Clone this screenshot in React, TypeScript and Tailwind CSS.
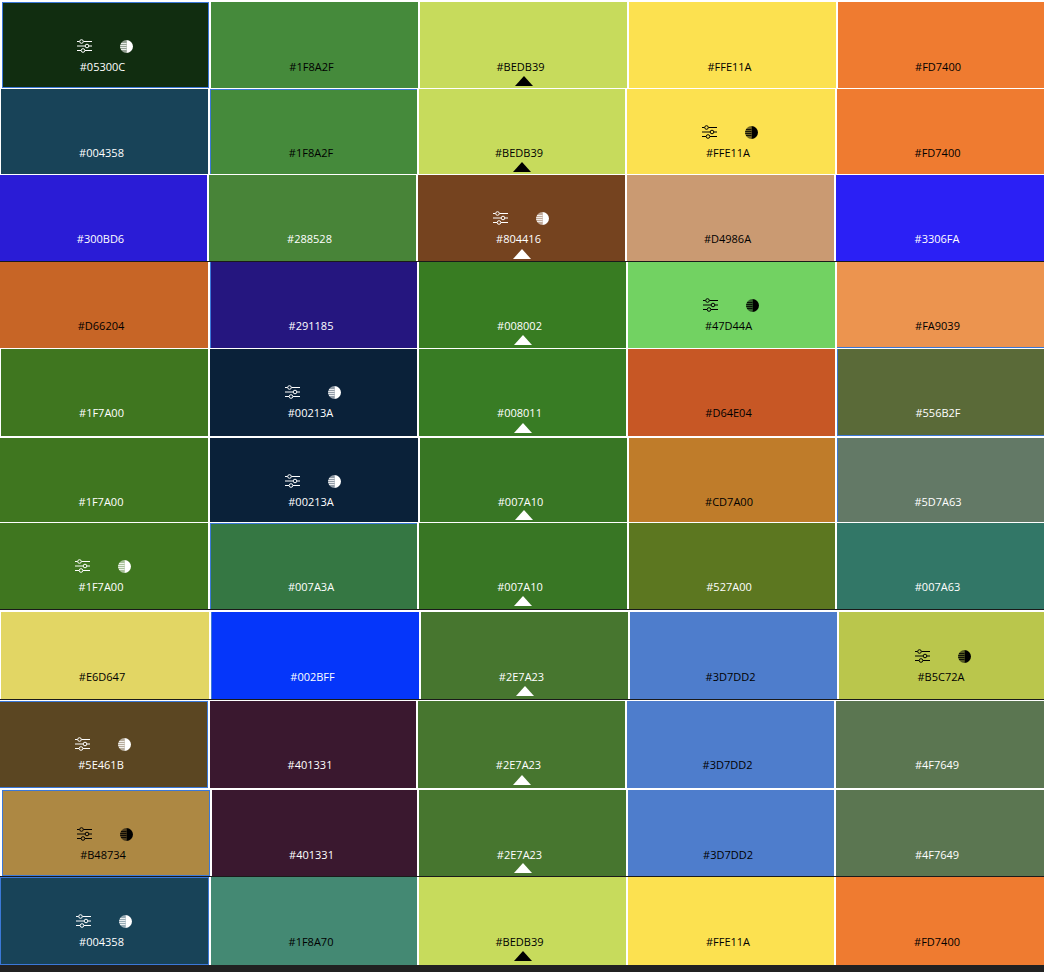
type Cell = {
  hex: string
  bg: string
  w: string
  dark?: boolean
  tools?: boolean
  arrow?: boolean
  edge?: string
}

type Row = { box: string; pad: string; tip: string; cells: Cell[] }

const rows: Row[] = [
  {
    box: "h-[86px] mt-[2px] pl-[2px] gap-[2px]",
    pad: "pb-[13px]",
    tip: "bottom-[2px]",
    cells: [
      { hex: "#05300C", bg: "bg-[#112D10]", w: "w-[207px]", tools: true, edge: "ring-1 ring-inset ring-[#3B78D8]" },
      { hex: "#1F8A2F", bg: "bg-[#458A3B]", w: "w-[207px]", dark: true },
      { hex: "#BEDB39", bg: "bg-[#C7DB5C]", w: "w-[207px]", dark: true, arrow: true },
      { hex: "#FFE11A", bg: "bg-[#FCE150]", w: "w-[207px]", dark: true },
      { hex: "#FD7400", bg: "bg-[#EF7B30]", w: "flex-1", dark: true },
    ],
  },
  {
    box: "h-[85px] mt-[1px] pl-[1px] gap-[2px]",
    pad: "pb-[13px]",
    tip: "bottom-[2px]",
    cells: [
      { hex: "#004358", bg: "bg-[#184358]", w: "w-[207px]" },
      { hex: "#1F8A2F", bg: "bg-[#458A3B]", w: "w-[207px]", dark: true, edge: "border-l border-t border-[#3B78D8]" },
      { hex: "#BEDB39", bg: "bg-[#C7DB5C]", w: "w-[206px]", dark: true, arrow: true },
      { hex: "#FFE11A", bg: "bg-[#FCE150]", w: "w-[208px]", dark: true, tools: true },
      { hex: "#FD7400", bg: "bg-[#EF7B30]", w: "flex-1", dark: true },
    ],
  },
  {
    box: "h-[87px] mt-[1px] gap-[2px] border-b border-[#1a1a1a]",
    pad: "pb-[14px]",
    tip: "bottom-[2px]",
    cells: [
      { hex: "#300BD6", bg: "bg-[#2A1CD6]", w: "w-[207px]" },
      { hex: "#288528", bg: "bg-[#488438]", w: "w-[207px]" },
      { hex: "#804416", bg: "bg-[#75431F]", w: "w-[207px]", tools: true, arrow: true },
      { hex: "#D4986A", bg: "bg-[#CA9A72]", w: "w-[207px]", dark: true },
      { hex: "#3306FA", bg: "bg-[#2B20F5]", w: "flex-1" },
    ],
  },
  {
    box: "h-[86px] gap-[2px]",
    pad: "pb-[14px]",
    tip: "bottom-[3px]",
    cells: [
      { hex: "#D66204", bg: "bg-[#C76526]", w: "w-[208px]", dark: true },
      { hex: "#291185", bg: "bg-[#25167F]", w: "w-[207px]", edge: "border-l border-[#3B78D8]" },
      { hex: "#008002", bg: "bg-[#387C22]", w: "w-[207px]", arrow: true },
      { hex: "#47D44A", bg: "bg-[#72D262]", w: "w-[207px]", dark: true, tools: true },
      { hex: "#FA9039", bg: "bg-[#EC944F]", w: "flex-1", dark: true, edge: "shadow-[inset_0_-1px_0_#3B78D8]" },
    ],
  },
  {
    box: "h-[87px] mt-[1px] pl-[1px] gap-[2px]",
    pad: "pb-[15px]",
    tip: "bottom-[3px]",
    cells: [
      { hex: "#1F7A00", bg: "bg-[#3F761F]", w: "w-[207px]" },
      { hex: "#00213A", bg: "bg-[#0A2139]", w: "w-[207px]", tools: true },
      { hex: "#008011", bg: "bg-[#387C24]", w: "w-[207px]", arrow: true },
      { hex: "#D64E04", bg: "bg-[#C75725]", w: "w-[207px]", dark: true },
      { hex: "#556B2F", bg: "bg-[#5A6A38]", w: "flex-1", edge: "border-l border-[#3B78D8] shadow-[inset_0_-1px_0_#3B78D8]" },
    ],
  },
  {
    box: "h-[84px] mt-[2px] gap-[2px]",
    pad: "pb-[12px]",
    tip: "bottom-[2px]",
    cells: [
      { hex: "#1F7A00", bg: "bg-[#3F761F]", w: "w-[208px]" },
      { hex: "#00213A", bg: "bg-[#0A2139]", w: "w-[208px]", tools: true },
      { hex: "#007A10", bg: "bg-[#387624]", w: "w-[207px]", arrow: true },
      { hex: "#CD7A00", bg: "bg-[#BF7C2A]", w: "w-[206px]", dark: true },
      { hex: "#5D7A63", bg: "bg-[#637966]", w: "flex-1", edge: "border-l border-[#3B78D8]" },
    ],
  },
  {
    box: "h-[87px] mt-[1px] gap-[2px] border-b border-[#1a1a1a]",
    pad: "pb-[14px]",
    tip: "bottom-[3px]",
    cells: [
      { hex: "#1F7A00", bg: "bg-[#3F761F]", w: "w-[208px]", tools: true },
      { hex: "#007A3A", bg: "bg-[#357743]", w: "w-[207px]", edge: "border-l border-t border-[#3B78D8]" },
      { hex: "#007A10", bg: "bg-[#387624]", w: "w-[208px]", arrow: true },
      { hex: "#527A00", bg: "bg-[#5C7720]", w: "w-[206px]" },
      { hex: "#007A63", bg: "bg-[#327767]", w: "flex-1" },
    ],
  },
  {
    box: "h-[88px] mt-[2px] pl-[1px] gap-[2px] border-b border-[#1a1a1a]",
    pad: "pb-[14px]",
    tip: "bottom-[3px]",
    cells: [
      { hex: "#E6D647", bg: "bg-[#E2D664]", w: "w-[208px]", dark: true },
      { hex: "#002BFF", bg: "bg-[#0536FA]", w: "w-[208px]", edge: "border-l border-[#3B78D8]" },
      { hex: "#2E7A23", bg: "bg-[#47762F]", w: "w-[207px]", arrow: true },
      { hex: "#3D7DD2", bg: "bg-[#4E7DCC]", w: "w-[207px]", dark: true },
      { hex: "#B5C72A", bg: "bg-[#BAC64C]", w: "w-[210px]", dark: true, tools: true },
    ],
  },
  {
    box: "h-[87px] mt-[1px] gap-[2px]",
    pad: "pb-[15px]",
    tip: "bottom-[3px]",
    cells: [
      { hex: "#5E461B", bg: "bg-[#5B4622]", w: "w-[208px]", tools: true, edge: "shadow-[inset_0_1px_0_#3B78D8,inset_-1px_0_0_#3B78D8,inset_0_-1px_0_#3B78D8]" },
      { hex: "#401331", bg: "bg-[#3A182F]", w: "w-[206px]" },
      { hex: "#2E7A23", bg: "bg-[#47762F]", w: "w-[207px]", arrow: true },
      { hex: "#3D7DD2", bg: "bg-[#4E7DCC]", w: "w-[207px]", dark: true },
      { hex: "#4F7649", bg: "bg-[#5B7651]", w: "flex-1" },
    ],
  },
  {
    box: "h-[87px] mt-[2px] pl-[2px] gap-[2px] border-b border-[#1a1a1a]",
    pad: "pb-[13px]",
    tip: "bottom-[3px]",
    cells: [
      { hex: "#B48734", bg: "bg-[#AD8843]", w: "w-[208px]", dark: true, tools: true, edge: "ring-1 ring-inset ring-[#3B78D8]" },
      { hex: "#401331", bg: "bg-[#3A182F]", w: "w-[205px]" },
      { hex: "#2E7A23", bg: "bg-[#47762F]", w: "w-[207px]", arrow: true },
      { hex: "#3D7DD2", bg: "bg-[#4E7DCC]", w: "w-[206px]", dark: true },
      { hex: "#4F7649", bg: "bg-[#5B7651]", w: "flex-1" },
    ],
  },
  {
    box: "h-[88px] gap-[2px]",
    pad: "pb-[15px]",
    tip: "bottom-[4px]",
    cells: [
      { hex: "#004358", bg: "bg-[#184358]", w: "w-[209px]", tools: true, edge: "ring-1 ring-inset ring-[#3B78D8]" },
      { hex: "#1F8A70", bg: "bg-[#448973]", w: "w-[206px]", dark: true },
      { hex: "#BEDB39", bg: "bg-[#C7DB5C]", w: "w-[207px]", dark: true, arrow: true },
      { hex: "#FFE11A", bg: "bg-[#FCE150]", w: "w-[206px]", dark: true },
      { hex: "#FD7400", bg: "bg-[#EF7B30]", w: "flex-1", dark: true },
    ],
  },
]

function SlidersIcon() {
  return (
    <svg width="15" height="14" viewBox="0 0 15 14" fill="none" stroke="currentColor" strokeWidth="1">
      <path d="M0 2.5h2.5M6.5 2.5H15M0 7h8M12 7h3M0 11.5h4M8 11.5h7" />
      <circle cx="4.5" cy="2.5" r="1.8" />
      <circle cx="10" cy="7" r="1.8" />
      <circle cx="6" cy="11.5" r="1.8" />
    </svg>
  )
}

function ContrastIcon() {
  return (
    <svg width="13" height="13" viewBox="0 0 13 13" fill="currentColor">
      <path d="M6.5 0a6.5 6.5 0 0 1 0 13z" />
      <path d="M6.5 0v13a6.5 6.5 0 0 1 0-13z" opacity=".55" />
      <path d="M1 3.5h5.5M.2 5.5h6.3M.2 7.5h6.3M1 9.5h5.5" stroke="currentColor" strokeWidth=".8" />
    </svg>
  )
}

function Swatch({ cell, pad, tip }: { cell: Cell; pad: string; tip: string }) {
  const color = cell.dark ? "text-black" : "text-white"
  return (
    <div className={`relative flex flex-col items-center justify-end shrink-0 ${pad} ${cell.w} ${cell.bg} ${color} ${cell.edge ?? ""}`}>
      {cell.tools && (
        <div className="flex items-center gap-[28px] mr-[2px] mb-[6px]">
          <SlidersIcon />
          <ContrastIcon />
        </div>
      )}
      <span className="mr-[6px] text-[11px] font-medium leading-4">{cell.hex}</span>
      {cell.arrow && (
        <div className={`absolute ${tip} left-1/2 -translate-x-1/2 w-0 h-0 border-l-[9px] border-r-[9px] border-b-[10px] border-l-transparent border-r-transparent ${cell.dark ? "border-b-black" : "border-b-white"}`} />
      )}
    </div>
  )
}

export default function App() {
  return (
    <div className="min-h-screen flex flex-col overflow-hidden bg-white font-['Open_Sans',sans-serif]">
      {rows.map((row, i) => (
        <div key={i} className={`flex shrink-0 ${row.box}`}>
          {row.cells.map((cell, j) => (
            <Swatch key={j} cell={cell} pad={row.pad} tip={row.tip} />
          ))}
        </div>
      ))}
      <div className="flex-1 bg-[#212121]" />
    </div>
  )
}
